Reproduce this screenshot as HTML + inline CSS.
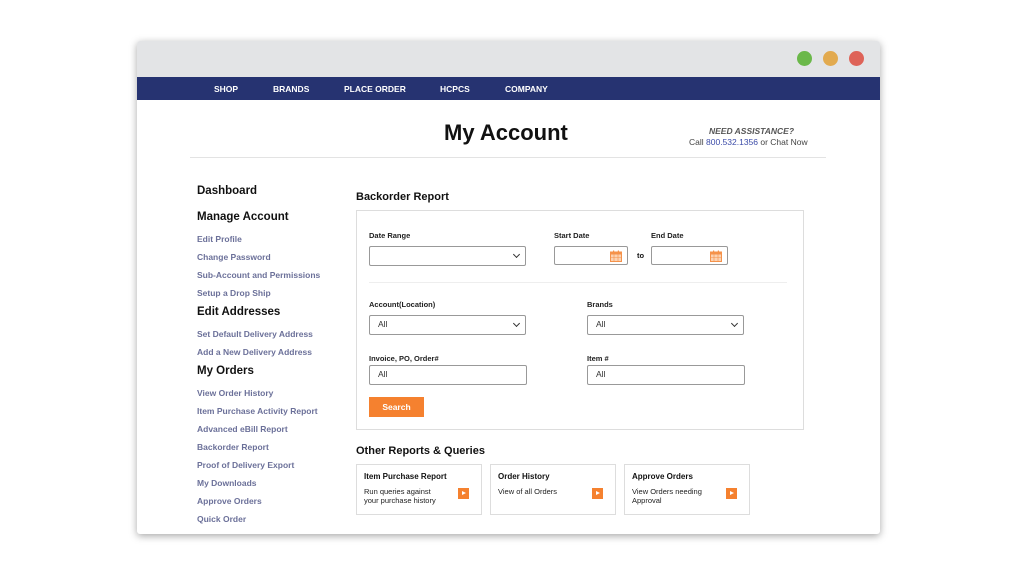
<!DOCTYPE html>
<html><head><meta charset="utf-8"><style>
*{margin:0;padding:0;box-sizing:border-box}
body{width:1016px;height:575px;background:#fff;position:relative;overflow:hidden;font-family:"Liberation Sans",Arial,sans-serif;color:#111}
.a{position:absolute;white-space:nowrap}
#win{position:absolute;left:137px;top:41px;width:743px;height:493px;background:#fff;box-shadow:0 2px 8px rgba(0,0,0,.35);border-radius:3px;overflow:hidden}
.dot{position:absolute;top:51px;width:15px;height:15px;border-radius:50%}
.nav{font-size:8.5px;font-weight:bold;color:#fff;top:84px}
.h{font-size:11.5px;font-weight:bold}
.l{font-size:8.5px;font-weight:bold;color:#6b7099}
.lb{font-size:7.5px;font-weight:bold;color:#222}
.sel,.inp{position:absolute;border:1px solid #999;border-radius:2px;background:#fff;font-size:8.5px;color:#333;padding-left:8px;line-height:17px}
.sel:after{content:"";position:absolute;right:6px;top:5px;width:4px;height:4px;border-right:1.3px solid #333;border-bottom:1.3px solid #333;transform:rotate(45deg)}
.cal{position:absolute;right:5px;top:3px}
.card{position:absolute;top:464px;width:126px;height:51px;border:1px solid #ddd}
.card b{position:absolute;left:7px;top:7px;font-size:8px}
.card span{position:absolute;left:7px;top:22px;font-size:7.5px;line-height:9px;color:#222}
.card i{position:absolute;left:101px;top:23px;width:11px;height:11px;background:#f5812f}
.card i:after{content:"";position:absolute;left:4px;top:3px;border-left:4px solid #fff;border-top:2.5px solid transparent;border-bottom:2.5px solid transparent}
</style></head><body>
<div id="win">
<div style="position:absolute;left:0;top:0;width:743px;height:36px;background:#e3e4e6"></div>
<div style="position:absolute;left:0;top:36px;width:743px;height:23px;background:#263371"></div>
</div>
<div class="dot" style="left:797px;background:#6bb84a"></div>
<div class="dot" style="left:823px;background:#e2aa4f"></div>
<div class="dot" style="left:849px;background:#de6358"></div>
<div class="a nav" style="left:214px">SHOP</div>
<div class="a nav" style="left:273px">BRANDS</div>
<div class="a nav" style="left:344px">PLACE ORDER</div>
<div class="a nav" style="left:440px">HCPCS</div>
<div class="a nav" style="left:505px">COMPANY</div>
<div class="a" style="left:444px;top:120px;font-size:22px;font-weight:bold">My Account</div>
<div class="a" style="left:709px;top:126px;font-size:8.5px;font-weight:bold;font-style:italic;color:#555">NEED ASSISTANCE?</div>
<div class="a" style="left:689px;top:137px;font-size:8.5px;color:#444">Call <span style="color:#3b4ba8">800.532.1356</span> or Chat Now</div>
<div style="position:absolute;left:190px;top:157px;width:636px;height:1px;background:#e3e3e3"></div>

<div class="a h" style="left:197px;top:185px">Dashboard</div>
<div class="a h" style="left:197px;top:211px">Manage Account</div>
<div class="a l" style="left:197px;top:234px">Edit Profile</div>
<div class="a l" style="left:197px;top:252px">Change Password</div>
<div class="a l" style="left:197px;top:270px">Sub-Account and Permissions</div>
<div class="a l" style="left:197px;top:288px">Setup a Drop Ship</div>
<div class="a h" style="left:197px;top:306px">Edit Addresses</div>
<div class="a l" style="left:197px;top:329px">Set Default Delivery Address</div>
<div class="a l" style="left:197px;top:347px">Add a New Delivery Address</div>
<div class="a h" style="left:197px;top:365px">My Orders</div>
<div class="a l" style="left:197px;top:388px">View Order History</div>
<div class="a l" style="left:197px;top:406px">Item Purchase Activity Report</div>
<div class="a l" style="left:197px;top:424px">Advanced eBill Report</div>
<div class="a l" style="left:197px;top:442px">Backorder Report</div>
<div class="a l" style="left:197px;top:460px">Proof of Delivery Export</div>
<div class="a l" style="left:197px;top:478px">My Downloads</div>
<div class="a l" style="left:197px;top:496px">Approve Orders</div>
<div class="a l" style="left:197px;top:514px">Quick Order</div>

<div class="a" style="left:356px;top:191px;font-size:11px;font-weight:bold">Backorder Report</div>
<div style="position:absolute;left:356px;top:210px;width:448px;height:220px;border:1px solid #ddd"></div>
<div class="a lb" style="left:369px;top:231px">Date Range</div>
<div class="a lb" style="left:554px;top:231px">Start Date</div>
<div class="a lb" style="left:651px;top:231px">End Date</div>
<div class="sel" style="left:369px;top:246px;width:157px;height:20px"></div>
<div class="inp" style="left:554px;top:246px;width:74px;height:19px"><svg class="cal" width="12" height="12" viewBox="0 0 12 12"><rect x="0.5" y="2" width="11" height="9.5" fill="#fbd2b2" stroke="#f5924a"/><rect x="0.5" y="2" width="11" height="2.5" fill="#f5924a"/><rect x="3" y="0.5" width="1.2" height="2.5" fill="#f5924a"/><rect x="7.8" y="0.5" width="1.2" height="2.5" fill="#f5924a"/><path d="M4 4.5v7M8 4.5v7M0.5 7.5h11" stroke="#f5924a" stroke-width=".6"/></svg></div>
<div class="a" style="left:637px;top:251px;font-size:7.5px;font-weight:bold">to</div>
<div class="inp" style="left:651px;top:246px;width:77px;height:19px"><svg class="cal" width="12" height="12" viewBox="0 0 12 12"><rect x="0.5" y="2" width="11" height="9.5" fill="#fbd2b2" stroke="#f5924a"/><rect x="0.5" y="2" width="11" height="2.5" fill="#f5924a"/><rect x="3" y="0.5" width="1.2" height="2.5" fill="#f5924a"/><rect x="7.8" y="0.5" width="1.2" height="2.5" fill="#f5924a"/><path d="M4 4.5v7M8 4.5v7M0.5 7.5h11" stroke="#f5924a" stroke-width=".6"/></svg></div>
<div style="position:absolute;left:369px;top:282px;width:418px;height:1px;background:#eee"></div>
<div class="a lb" style="left:369px;top:300px">Account(Location)</div>
<div class="a lb" style="left:587px;top:300px">Brands</div>
<div class="sel" style="left:369px;top:315px;width:157px;height:20px">All</div>
<div class="sel" style="left:587px;top:315px;width:157px;height:20px">All</div>
<div class="a lb" style="left:369px;top:354px">Invoice, PO, Order#</div>
<div class="a lb" style="left:587px;top:354px">Item #</div>
<div class="inp" style="left:369px;top:365px;width:158px;height:20px">All</div>
<div class="inp" style="left:587px;top:365px;width:158px;height:20px">All</div>
<div class="a" style="left:369px;top:397px;width:55px;height:20px;background:#f5812f;color:#fff;font-size:8.5px;font-weight:bold;text-align:center;line-height:20px">Search</div>

<div class="a" style="left:356px;top:445px;font-size:11px;font-weight:bold">Other Reports &amp; Queries</div>
<div class="card" style="left:356px"><b>Item Purchase Report</b><span>Run queries against<br>your purchase history</span><i></i></div>
<div class="card" style="left:490px"><b>Order History</b><span>View of all Orders</span><i></i></div>
<div class="card" style="left:624px"><b>Approve Orders</b><span>View Orders needing<br>Approval</span><i></i></div>
</body></html>
